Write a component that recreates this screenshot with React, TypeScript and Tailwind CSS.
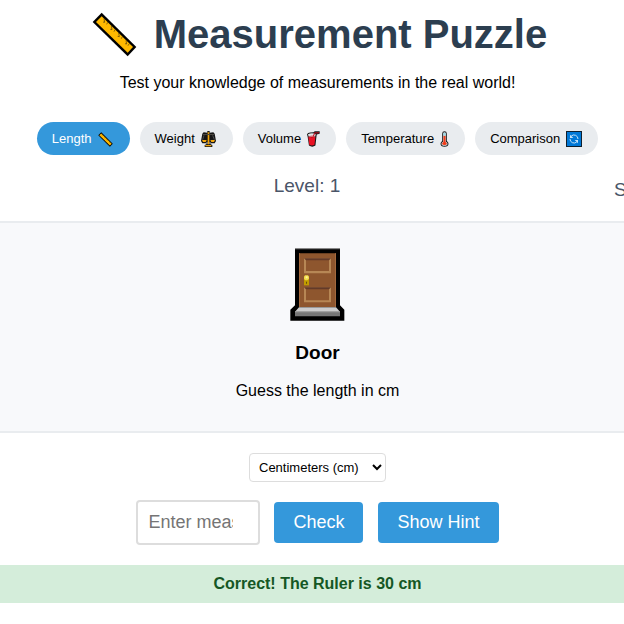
import { useState } from "react";
import type { ReactNode } from "react";

function RulerIcon({ className }: { className: string }) {
  return (
    <svg viewBox="38 35 135 135" className={className} aria-hidden="true">
      <path d="M67 37 171 140 145 168 40 65Z" fill="#000" />
      <path d="M67 48 161 140 145 157 50 65Z" fill="#ffb900" />
      <path
        d="M74 55l2 11-5-1M85 66l-3 6M96 77l2 11-5-1M107 88l-3 6M118 98l2 11-5-1M129 109l-3 6M140 120l2 11-5-1M150 130l-4 6"
        fill="none"
        stroke="#4d3a0c"
        strokeWidth="2"
      />
    </svg>
  );
}

function ScaleIcon() {
  return (
    <svg viewBox="0 0 45 48" className="h-4 w-[15px]" aria-hidden="true">
      <path d="M19 0h7v5l11-1 4 4 4 22-4 7H29v3l5 2v6H11v-6l5-2v-3H4l-4-7L4 8l4-4 11 1z" fill="#151515" />
      <path d="M20 4h5v36h-5zM13 42h18v4H13z" fill="#f0a30a" />
      <path d="M6 9h33v3H6z" fill="#4a4740" />
      <path d="M3 27h14l-3 6H6zM28 27h14l-3 6h-8z" fill="#f5a70c" />
      <path d="M9 13 5 26M35 13l5 13" stroke="#666" strokeWidth="2" />
      <path d="M17 33h2v6h-2zM26 33h2v6h-2z" fill="#e8ebee" />
    </svg>
  );
}

function CupIcon() {
  return (
    <svg viewBox="0 0 40 48" className="h-4 w-[13px]" aria-hidden="true">
      <path d="M0 9q2-4 10-5l10-1L24 0h15v8l-9 2-1 7-3 27q-10 7-20 0L2 17z" fill="#171717" />
      <path d="M3 9q12-5 24 0l-2 7H5z" fill="#dfe3e6" />
      <path d="M4 16q11 5 22 0l-3 26q-8 4-16 0z" fill="#e81224" />
      <path d="M5 15q10-4 21 0-10 5-21 0z" fill="#f36a73" />
      <path d="m17 16 6-12 14-1v3l-12 1-5 10z" fill="#c50f1f" />
    </svg>
  );
}

function ThermometerIcon() {
  return (
    <svg viewBox="0 0 26 48" className="h-4 w-[9px]" aria-hidden="true">
      <path d="M6 8Q6 1 13 1t7 7v22q5 3 5 8 0 9-12 9T1 38q0-5 5-8z" fill="#1d1d1d" />
      <path d="M9 8q0-4 4-4t4 4v24q5 2 5 6 0 6-9 6t-9-6q0-4 5-6z" fill="#d9e5ea" />
      <path d="M10 14h6v19q4 2 4 5 0 4-7 4t-7-4q0-3 4-5z" fill="#f03a17" />
      <path d="M10 6h6v8h-6z" fill="#9adcea" />
    </svg>
  );
}

function CycleIcon() {
  return (
    <svg viewBox="0 0 48 48" className="size-4" aria-hidden="true">
      <path d="M0 0h48v48H0z" fill="#10202e" />
      <path d="M3 3h42v42H3z" fill="#0078d7" />
      <path d="M16 15a12 12 0 0 1 20 9M32 33a12 12 0 0 1-20-9" fill="none" stroke="#c4e2f8" strokeWidth="3" />
      <path d="M12 11v10h10zM36 37V27H26z" fill="#c4e2f8" />
    </svg>
  );
}

function DoorPicture() {
  return (
    <svg viewBox="0 0 165 219" className="h-[73px] w-[55px]" role="img" aria-label="Door">
      <path d="M15 2h135v170l13 13v33H1v-33l14-13z" fill="#000" />
      <path d="M15 1h135v3H15z" fill="#777" />
      <path d="M27 16h111v161H27z" fill="#8e562e" />
      <path d="M27 16h3v161h-3zM135 16h3v161h-3z" fill="#a4693d" />
      <path d="M42 31h81v45H42zM42 118h81v45H42z" fill="#b78755" />
      <path d="M48 36h69v33H48zM48 123h69v34H48z" fill="#8e562e" />
      <path d="M42 31h81l-6 6H48zM42 118h81l-6 6H48z" fill="#633a28" />
      <path d="M42 84h15v28H42z" fill="#c19c00" />
      <path d="M45 82h9l3 4v7l-5 4h-6l-4-4v-7z" fill="#f0d84a" />
      <path d="M47 85h6v6h-6z" fill="#fff59a" />
      <path d="M48 101h3v6h-3z" fill="#66500c" />
      <path d="M27 178h111l12 13H15z" fill="#cccccc" />
      <path d="M15 191h135v14H15z" fill="#767676" />
      <path d="M15 190h135v3H15z" fill="#a5a5a5" />
    </svg>
  );
}

const tabs: { name: string; icon: ReactNode; box: string }[] = [
  { name: "Length", icon: <RulerIcon className="size-[15px]" />, box: "w-[19px]" },
  { name: "Weight", icon: <ScaleIcon />, box: "w-[19px]" },
  { name: "Volume", icon: <CupIcon />, box: "w-4" },
  { name: "Temperature", icon: <ThermometerIcon />, box: "w-3" },
  { name: "Comparison", icon: <CycleIcon />, box: "w-[19px]" },
];

const actionButton =
  "h-[41px] rounded bg-[#3498db] px-[19px] text-[18px] text-white";

export default function App() {
  const [active, setActive] = useState("Length");

  return (
    <div className="overflow-hidden bg-white font-['Liberation_Sans',Arial,sans-serif] text-black">
      <main className="w-[calc(100%+11px)] pt-[10px] text-center">
        <h1 className="flex items-center justify-center gap-3 text-[40px] leading-[48px] font-bold text-[#2c3e50]">
          <span className="flex w-[54px] justify-center">
            <RulerIcon className="size-[45px]" />
          </span>
          Measurement Puzzle
        </h1>
        <p className="mt-[13px] text-base">Test your knowledge of measurements in the real world!</p>

        <nav className="mt-[27px] flex justify-center gap-[10px]">
          {tabs.map((tab) => (
            <button
              key={tab.name}
              type="button"
              onClick={() => setActive(tab.name)}
              className={`flex h-[33px] items-center gap-1 rounded-full px-[15px] pt-px text-[13px] ${
                active === tab.name ? "bg-[#3498db] text-white" : "bg-[#e9ecef] text-black"
              }`}
            >
              {tab.name}
              <span className={`flex justify-center ${tab.box}`}>{tab.icon}</span>
            </button>
          ))}
        </nav>

        <div className="mt-[19px] flex text-[19px] leading-6 text-[#4a5568]">
          <div className="flex-1" />
          <div>Level: 1</div>
          <div className="flex-1" />
          <div className="w-[21px] pt-1 text-left whitespace-nowrap">Score: 0</div>
        </div>

        <section className="mt-[19px] flex flex-col items-center border-y-2 border-[#e9ecef] bg-[#f8f9fb] pt-[25px] pb-7">
          <DoorPicture />
          <h2 className="mt-5 text-[19px] leading-6 font-bold">Door</h2>
          <p className="mt-[14px] text-base">Guess the length in cm</p>
        </section>

        <div className="mt-5 flex justify-center">
          <select
            aria-label="Unit"
            className="h-[29px] w-[137px] rounded border border-[#dddddd] bg-white px-[5px] text-[13px]"
          >
            <option>Centimeters (cm)</option>
            <option>Meters (m)</option>
          </select>
        </div>

        <form
          className="mt-[18px] flex items-center justify-center"
          onSubmit={(event) => event.preventDefault()}
        >
          <input
            type="number"
            aria-label="Enter measurement"
            placeholder="Enter measurement"
            className="mr-[14px] h-[45px] w-[124px] rounded border-2 border-[#dddddd] bg-white px-[10px] text-[18px] placeholder:text-[#757575]"
          />
          <button type="submit" className={`mr-[15px] ${actionButton}`}>
            Check
          </button>
          <button type="button" className={actionButton}>
            Show Hint
          </button>
        </form>

        <p role="status" className="mt-5 bg-[#d4edda] py-[7px] text-base font-bold text-[#155724]">
          Correct! The Ruler is 30 cm
        </p>
      </main>
    </div>
  );
}
